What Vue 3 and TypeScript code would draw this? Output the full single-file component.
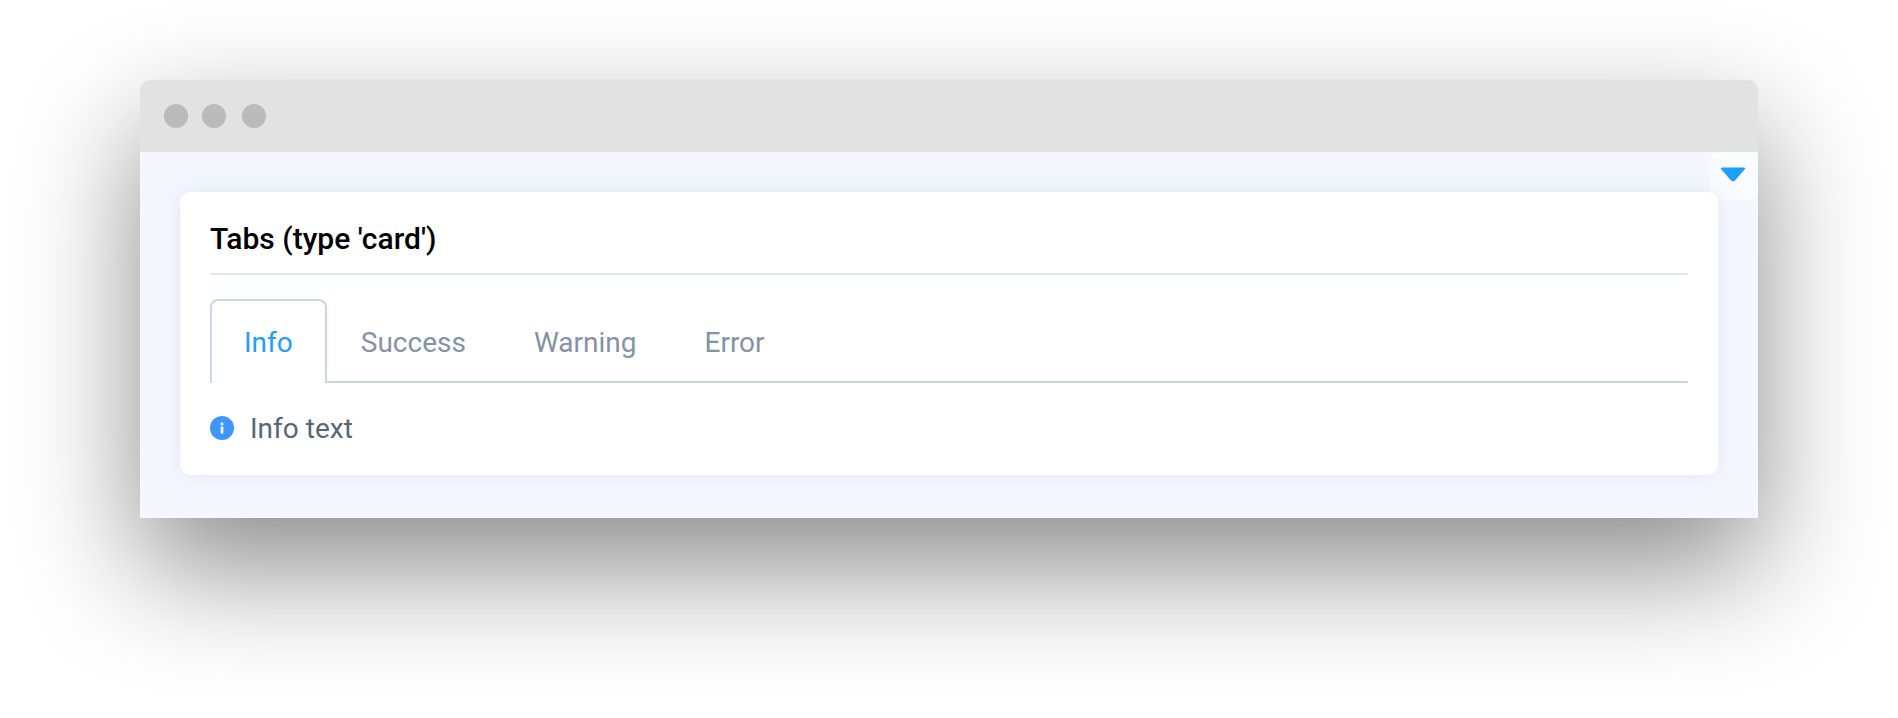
<script setup lang="ts">
const tabs: string[] = ['Info', 'Success', 'Warning', 'Error']
</script>

<template>
  <div class="stage">
    <div class="window">
      <div class="titlebar">
        <span class="dot"></span>
        <span class="dot"></span>
        <span class="dot dot-last"></span>
      </div>
      <div class="content">
        <div class="toggle">
          <svg class="caret" width="26" height="15" viewBox="0 0 26 15">
            <path d="M2 0.5 H24 Q26 0.5 25 2 L15 13.5 Q13 15 11 13.5 L1 2 Q0 0.5 2 0.5 Z" fill="#1e9fff" />
          </svg>
        </div>
        <section class="card">
          <h2 class="card-title">Tabs (type 'card')</h2>
          <div class="tabs">
            <div
              v-for="(tab, i) in tabs"
              :key="tab"
              class="tab"
              :class="{ active: i === 0 }"
            >{{ tab }}</div>
          </div>
          <div class="panel">
            <svg class="info-icon" width="24" height="24" viewBox="0 0 24 24">
              <circle cx="12" cy="12" r="12" fill="#3f95ff" />
              <rect x="10.7" y="10.4" width="2.6" height="7" rx="0.4" fill="#fff" />
              <rect x="10.7" y="6.6" width="2.6" height="2.6" rx="0.4" fill="#fff" />
            </svg>
            <span class="panel-text">Info text</span>
          </div>
        </section>
      </div>
    </div>
  </div>
</template>

<style>
html, body { background: #fff; overflow: hidden; }
</style>

<style scoped>
.stage {
  width: 1898px;
  height: 718px;
  box-sizing: border-box;
  padding: 80px 140px 0;
  background: #fff;
  font-family: Roboto, "Noto Sans", sans-serif;
}
.window {
  width: 1618px;
  height: 438px;
  display: flex;
  flex-direction: column;
  border-radius: 10px 10px 0 0;
  box-shadow: 0 50px 120px rgba(0, 0, 0, 0.46);
  overflow: hidden;
}
.titlebar {
  height: 72px;
  flex: none;
  display: flex;
  align-items: center;
  padding-left: 24px;
  background: #e2e2e2;
}
.dot {
  width: 24px;
  height: 24px;
  margin-right: 14px;
  border-radius: 50%;
  background: #bbbbbb;
}
.dot-last { margin-left: 2px; margin-right: 0; }
.content {
  position: relative;
  flex: 1;
  padding: 40px;
  background: #f4f7fe;
}
.toggle {
  position: absolute;
  top: 0;
  right: 0;
  width: 48px;
  height: 48px;
  display: flex;
  justify-content: center;
  padding-top: 15px;
  box-sizing: border-box;
  background: #f9fbff;
  border-radius: 8px;
}
.caret { display: block; margin-left: -2px; }
.card {
  position: relative;
  height: 283px;
  box-sizing: border-box;
  padding: 0 30px;
  background: #fff;
  border-radius: 10px;
  box-shadow: 0 0 20px rgba(100, 120, 180, 0.13);
}
.card-title {
  margin: 0;
  height: 83px;
  box-sizing: border-box;
  padding-top: 29px;
  font-size: 30px;
  line-height: 36px;
  font-weight: 500;
  color: #000;
  border-bottom: 2px solid #e1e6ed;
}
.tabs {
  display: flex;
  height: 84px;
  margin-top: 24px;
  box-sizing: border-box;
  border-bottom: 2px solid #ccd7e4;
}
.tab {
  height: 84px;
  box-sizing: border-box;
  padding: 0 34px;
  font-size: 28px;
  line-height: 88px;
  color: #8492a6;
}
.tab:first-child { padding-left: 0; }
.tab.active {
  padding: 0 32px;
  color: #1e9fff;
  background: #fff;
  border: 2px solid #ccd7e4;
  border-bottom: 0;
  border-radius: 8px 8px 0 0;
  line-height: 84px;
}
.panel {
  display: flex;
  align-items: center;
  margin-top: 28px;
}
.info-icon { display: block; flex: none; margin-top: -2px; }
.panel-text {
  margin-left: 16px;
  font-size: 28px;
  line-height: 36px;
  color: #566777;
}
</style>
